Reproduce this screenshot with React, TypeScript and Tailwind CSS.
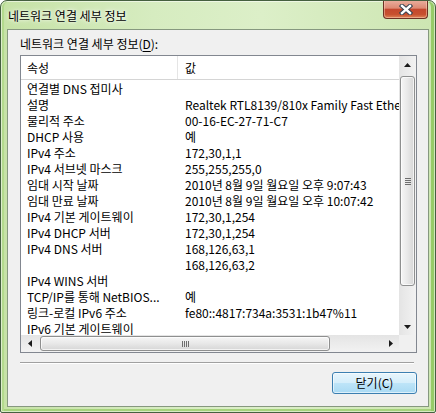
// Network connection details dialog (Windows 7 Aero, green theme)

const rows: [string, string][] = [
  ['연결별 DNS 접미사', ''],
  ['설명', 'Realtek RTL8139/810x Family Fast Ethernet NIC'],
  ['물리적 주소', '00-16-EC-27-71-C7'],
  ['DHCP 사용', '예'],
  ['IPv4 주소', '172,30,1,1'],
  ['IPv4 서브넷 마스크', '255,255,255,0'],
  ['임대 시작 날짜', '2010년 8월 9일 월요일 오후 9:07:43'],
  ['임대 만료 날짜', '2010년 8월 9일 월요일 오후 10:07:42'],
  ['IPv4 기본 게이트웨이', '172,30,1,254'],
  ['IPv4 DHCP 서버', '172,30,1,254'],
  ['IPv4 DNS 서버', '168,126,63,1'],
  ['', '168,126,63,2'],
  ['IPv4 WINS 서버', ''],
  ['TCP/IP를 통해 NetBIOS...', '예'],
  ['링크-로컬 IPv6 주소', 'fe80::4817:734a:3531:1b47%11'],
  ['IPv6 기본 게이트웨이', ''],
];

function Arrow({ dir }: { dir: 'up' | 'down' | 'left' | 'right' }) {
  const pts = {
    up: '0,4 3.5,0 7,4',
    down: '0,0 7,0 3.5,4',
    left: '4,0 4,7 0,3.5',
    right: '0,0 4,3.5 0,7',
  }[dir];
  const vertical = dir === 'up' || dir === 'down';
  return (
    <svg width={vertical ? 7 : 4} height={vertical ? 4 : 7} viewBox={vertical ? '0 0 7 4' : '0 0 4 7'}>
      <polygon points={pts} fill="#1a1a1a" />
    </svg>
  );
}

function VScroll() {
  return (
    <div className="flex h-full w-[17px] flex-col bg-[linear-gradient(to_right,#e4e4e4,#f2f2f2)]">
      <div className="flex h-[17px] items-center justify-center">
        <Arrow dir="up" />
      </div>
      <div className="mx-px mt-[3px] flex h-[210px] items-center justify-center rounded-[3px] border border-[#8e8f8f] bg-[linear-gradient(to_right,#f6f6f6,#e8e8e8_50%,#d6d6d6)] shadow-[inset_0_0_0_1px_rgba(255,255,255,0.7)]">
        <div className="flex w-[6px] flex-col gap-[1px]">
          <div className="h-px bg-[#6e6e6e]" />
          <div className="h-px bg-[#6e6e6e]" />
          <div className="h-px bg-[#6e6e6e]" />
          <div className="h-px bg-[#6e6e6e]" />
        </div>
      </div>
      <div className="flex-1" />
      <div className="flex h-[17px] items-center justify-center">
        <Arrow dir="down" />
      </div>
    </div>
  );
}

function HScroll() {
  return (
    <div className="flex h-full w-[378px] items-center bg-[linear-gradient(to_bottom,#e4e4e4,#f2f2f2)]">
      <div className="flex h-full w-[17px] items-center justify-center">
        <Arrow dir="left" />
      </div>
      <div className="ml-[2px] flex h-[15px] w-[290px] items-center justify-center rounded-[3px] border border-[#8e8f8f] bg-[linear-gradient(to_bottom,#f6f6f6,#e8e8e8_50%,#d6d6d6)] shadow-[inset_0_0_0_1px_rgba(255,255,255,0.7)]">
        <div className="flex h-[6px] gap-[1px]">
          <div className="w-px bg-[#6e6e6e]" />
          <div className="w-px bg-[#6e6e6e]" />
          <div className="w-px bg-[#6e6e6e]" />
          <div className="w-px bg-[#6e6e6e]" />
        </div>
      </div>
      <div className="flex-1" />
      <div className="flex h-full w-[17px] items-center justify-center">
        <Arrow dir="right" />
      </div>
    </div>
  );
}

function CloseButton() {
  return (
    <div className="-mt-px flex h-[19px] w-[45px] items-center justify-center rounded-b-[4px] border border-t-0 border-[#6b3124] bg-[linear-gradient(to_bottom,#eab0a0_0%,#dd8a74_45%,#c4482e_52%,#c7502f_80%,#de8458_100%)] shadow-[inset_0_0_0_1px_rgba(255,220,200,0.45)]">
      <svg width="14" height="11" viewBox="0 0 14 11">
        <path d="M3 2 L11 9 M11 2 L3 9" stroke="#34404f" strokeWidth="4.4" strokeLinecap="square" />
        <path d="M3 2 L11 9 M11 2 L3 9" stroke="#ffffff" strokeWidth="2.4" strokeLinecap="square" />
      </svg>
    </div>
  );
}

export default function App() {
  return (
    <div className="flex h-[413px] w-[436px] flex-col overflow-hidden rounded-t-[7px] rounded-b-[2px] border border-[#45603f] bg-[linear-gradient(to_right,#c6e2a6,#d6ecc0_35%,#dcefc8_60%,#cde6b2)] font-['Noto_Sans_CJK_KR',sans-serif] text-[12px] leading-[16px] text-black shadow-[inset_0_0_0_1px_rgba(255,255,255,0.55),inset_3px_0_0_0_#b3da8d,inset_-4px_0_0_0_#97cb68,inset_0_-3px_0_0_#a6d27c]">
      {/* Title bar */}
      <div className="flex h-[28px] shrink-0 items-start justify-between pl-[7px] pr-[7px]">
        <div className="pt-[7px] [text-shadow:0_0_6px_#ffffff,0_0_3px_#ffffff]">네트워크 연결 세부 정보</div>
        <CloseButton />
      </div>

      {/* Client area */}
      <div className="mx-[6px] flex h-[378px] shrink-0 flex-col border border-[#86987f] bg-[#f0f0f0] pl-[12px] pr-[11px]">
        <div className="mt-[6px] h-[16px]">
          네트워크 연결 세부 정보(<span className="underline underline-offset-2">D</span>):
        </div>

        <div className="mt-[3px] flex h-[298px] w-[397px] flex-col border border-[#828790] bg-white">
          <div className="flex h-[279px]">
            <div className="w-[378px] overflow-hidden">
              <div className="flex h-[24px] border-b border-[#d5d5d5]">
                <div className="flex w-[157px] items-center border-r border-[#e5e5e5] pl-[6px]">속성</div>
                <div className="flex items-center pl-[7px]">값</div>
              </div>
              <div className="pt-px">
                {rows.map(([k, v], i) => (
                  <div key={i} className="flex h-[16px] whitespace-nowrap">
                    <div className="w-[157px] shrink-0 overflow-hidden pl-[6px]">{k}</div>
                    <div className="pl-[7px]">{v}</div>
                  </div>
                ))}
              </div>
            </div>
            <VScroll />
          </div>
          <div className="flex h-[17px]">
            <HScroll />
            <div className="w-[17px] bg-[#f0f0f0]" />
          </div>
        </div>

        <div className="mt-[9px] h-[2px] w-[394px] border-t border-b border-t-[#a0a0a0] border-b-white" />

        <div className="mt-[8px] flex justify-end">
          <button className="h-[22px] w-[85px] rounded-[3px] border border-[#3c7fb1] bg-[linear-gradient(to_bottom,#e8f5fc,#d5eefb_48%,#bde4f8_52%,#a9daf4)] text-[12px] leading-[16px] text-black shadow-[inset_0_0_0_1px_rgba(255,255,255,0.6)]">
            닫기(C)
          </button>
        </div>
      </div>
    </div>
  );
}
